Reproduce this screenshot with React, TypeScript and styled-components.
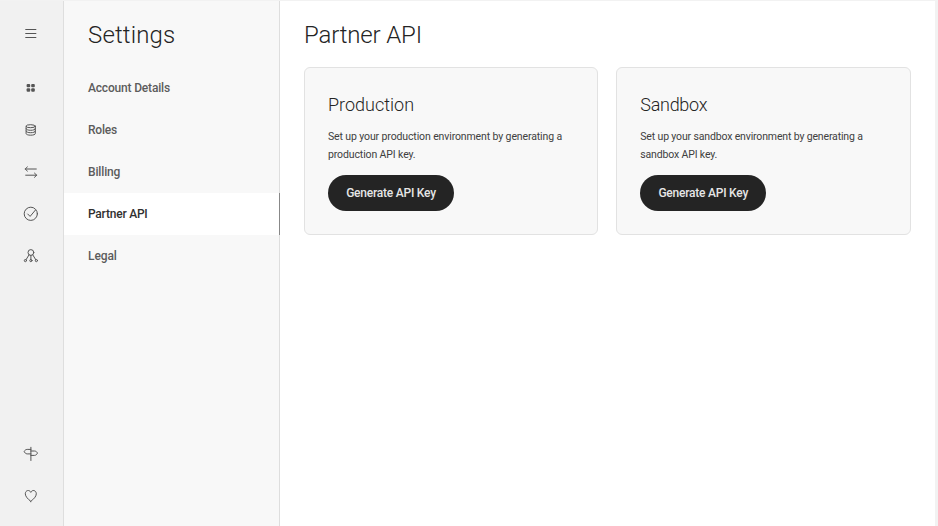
import React from "react";
import styled, { createGlobalStyle } from "styled-components";

const Global = createGlobalStyle`
  * { box-sizing: border-box; }
  body { margin: 0; background: #f2f2f2; font-family: Roboto, "Liberation Sans", sans-serif; color: #242424; }
`;

const Page = styled.div`
  display: flex;
  height: 526px;
  width: 938px;
  padding: 1px 3.5px 0 0;
  background: #f2f2f2;
  overflow: hidden;
`;

const Rail = styled.nav`
  width: 63px;
  flex: none;
  display: flex;
  flex-direction: column;
  justify-content: space-between;
  background: #f1f1f1;
  padding: 12px 1px 9px 0;
`;

const RailGroup = styled.div<{ $gap?: number }>`
  display: flex;
  flex-direction: column;
  align-items: center;
  & > :first-child { margin-bottom: ${(p) => p.$gap ?? 0}px; }
`;

const RailButton = styled.a`
  height: 42px;
  width: 62px;
  display: flex;
  align-items: center;
  justify-content: center;
  color: #555;
  svg {
    width: 16px;
    height: 16px;
    fill: none;
    stroke: currentColor;
    stroke-width: 1;
    stroke-linecap: round;
    stroke-linejoin: round;
  }
`;

const Sidebar = styled.aside`
  width: 217px;
  flex: none;
  background: #f8f8f8;
  border-left: 1px solid #dedede;
  border-right: 1px solid #dedede;
`;

const Title = styled.h1<{ $spacing: number }>`
  margin: 0;
  height: 66px;
  line-height: 69px;
  font-size: 24px;
  font-weight: 300;
  letter-spacing: ${(p) => p.$spacing}px;
  white-space: nowrap;
`;

const SidebarHead = styled.div`
  padding-left: 24px;
`;

const NavItem = styled.a<{ $active?: boolean; $spacing: number }>`
  display: block;
  height: 42px;
  padding-left: 24px;
  margin-right: -1px;
  line-height: 42px;
  font-size: 12px;
  font-weight: 500;
  letter-spacing: ${(p) => p.$spacing}px;
  color: ${(p) => (p.$active ? "#303030" : "#5c5c5c")};
  background: ${(p) => (p.$active ? "#fff" : "transparent")};
  border-right: 1px solid ${(p) => (p.$active ? "#888" : "transparent")};
`;

const Main = styled.main`
  flex: 1;
  background: #fff;
  padding: 0 24px;
`;

const Cards = styled.div`
  display: grid;
  grid-template-columns: 1fr 1fr;
  gap: 18px;
`;

const Card = styled.section`
  height: 168px;
  padding: 23px;
  background: #f8f8f8;
  border: 1px solid #e2e2e2;
  border-radius: 6px;
`;

const CardTitle = styled.h2<{ $spacing: number }>`
  margin: 0;
  height: 37px;
  line-height: 27px;
  font-size: 18px;
  font-weight: 300;
  letter-spacing: ${(p) => p.$spacing}px;
`;

const CardText = styled.p<{ $spacing: number }>`
  margin: 0 0 11px;
  font-size: 10.5px;
  line-height: 18px;
  letter-spacing: ${(p) => p.$spacing}px;
  color: #404040;
  white-space: nowrap;
`;

const Button = styled.button`
  width: 126px;
  height: 36px;
  padding: 0;
  display: block;
  border: 0;
  border-radius: 18px;
  background: #242424;
  color: #e6e6e6;
  font-family: inherit;
  font-size: 12px;
  font-weight: 500;
  line-height: 36px;
  letter-spacing: -0.22px;
`;

const topIcons = [
  <svg viewBox="0 0 16 16">
    <path d="M2.3 3.5h11" strokeLinecap="butt" />
    <path d="M2.3 7.5h11M2.3 11.5h11" strokeLinecap="butt" />
  </svg>,
  <svg viewBox="0 0 16 16">
    <g fill="currentColor" stroke="none">
      <rect x="3.6" y="3.9" width="3.6" height="3.4" rx="1" />
      <rect x="8.2" y="3.9" width="3.6" height="3.4" rx="1" />
      <rect x="3.6" y="8.3" width="3.6" height="3.4" rx="1" />
      <rect x="8.2" y="8.3" width="3.6" height="3.4" rx="1" />
    </g>
  </svg>,
  <svg viewBox="0 0 16 16">
    <ellipse cx="7.7" cy="4.2" rx="4.6" ry="1.5" />
    <path d="M3.1 4.2v7.4c0 .9 2 1.6 4.6 1.6s4.6-.7 4.6-1.6V4.2M3.1 6.7c0 .9 2 1.6 4.6 1.6s4.6-.7 4.6-1.6M3.1 9.1c0 .9 2 1.6 4.6 1.6s4.6-.7 4.6-1.6" />
  </svg>,
  <svg viewBox="0 0 16 16"><path d="M13.3 5H2.2M4.4 2.9L2.2 5l2.2 2.1M2.7 11.2h11M11.5 9.1l2.2 2.1-2.2 2.1" /></svg>,
  <svg viewBox="0 0 16 16"><circle cx="7.8" cy="7.8" r="6.6" /><path d="M4.7 8l2.4 2.4 5.3-6.3" /></svg>,
  <svg viewBox="0 0 16 16">
    <circle cx="7.9" cy="4.5" r="2.9" />
    <path d="M6 6.9L3.1 11.6M9.8 6.9l2.9 4.7M7.9 7.4v4.1" />
    <circle cx="2.4" cy="12.6" r="1.1" /><circle cx="7.9" cy="12.6" r="1.1" /><circle cx="13.4" cy="12.6" r="1.1" />
  </svg>,
];

const bottomIcons = [
  <svg viewBox="0 0 16 16">
    <path d="M7.9 1.3v13.2M7.9 3.4H4.2C2.8 3.4 1.4 4.6 1.2 5.5c.2 1 1.6 2.4 3 2.4h3.7M7.9 5h3.6c1.4 0 2.7 1.1 2.9 2.1-.2 1-1.5 2.3-2.9 2.3H7.9" />
  </svg>,
  <svg viewBox="0 0 16 16">
    <path d="M7.8 13.4C5 11 2.3 8.6 2.3 5.8c0-3.5 4.1-4.6 5.5-1.4 1.4-3.2 5.5-2.1 5.5 1.4 0 2.8-2.7 5.2-5.5 7.6z" />
  </svg>,
];

const navItems = [
  { label: "Account Details", spacing: -0.18 },
  { label: "Roles", spacing: -0.2 },
  { label: "Billing", spacing: -0.15 },
  { label: "Partner API", spacing: -0.22, active: true },
  { label: "Legal", spacing: -0.1 },
];

const environments = [
  { name: "Production", titleSpacing: 0, lines: ["Set up your production environment by generating a", "production API key."], spacing: -0.12 },
  { name: "Sandbox", titleSpacing: -0.28, lines: ["Set up your sandbox environment by generating a", "sandbox API key."], spacing: -0.15 },
];

export default function App() {
  return (
    <>
      <Global />
      <Page>
        <Rail>
          <RailGroup $gap={12}>
            {topIcons.map((icon, i) => <RailButton key={i}>{icon}</RailButton>)}
          </RailGroup>
          <RailGroup>
            {bottomIcons.map((icon, i) => <RailButton key={i}>{icon}</RailButton>)}
          </RailGroup>
        </Rail>
        <Sidebar>
          <SidebarHead><Title $spacing={0.15}>Settings</Title></SidebarHead>
          {navItems.map((n) => (
            <NavItem key={n.label} $active={n.active} $spacing={n.spacing}>{n.label}</NavItem>
          ))}
        </Sidebar>
        <Main>
          <Title $spacing={-0.15}>Partner API</Title>
          <Cards>
            {environments.map((e) => (
              <Card key={e.name}>
                <CardTitle $spacing={e.titleSpacing}>{e.name}</CardTitle>
                <CardText $spacing={e.spacing}>{e.lines[0]}<br />{e.lines[1]}</CardText>
                <Button>Generate API Key</Button>
              </Card>
            ))}
          </Cards>
        </Main>
      </Page>
    </>
  );
}
